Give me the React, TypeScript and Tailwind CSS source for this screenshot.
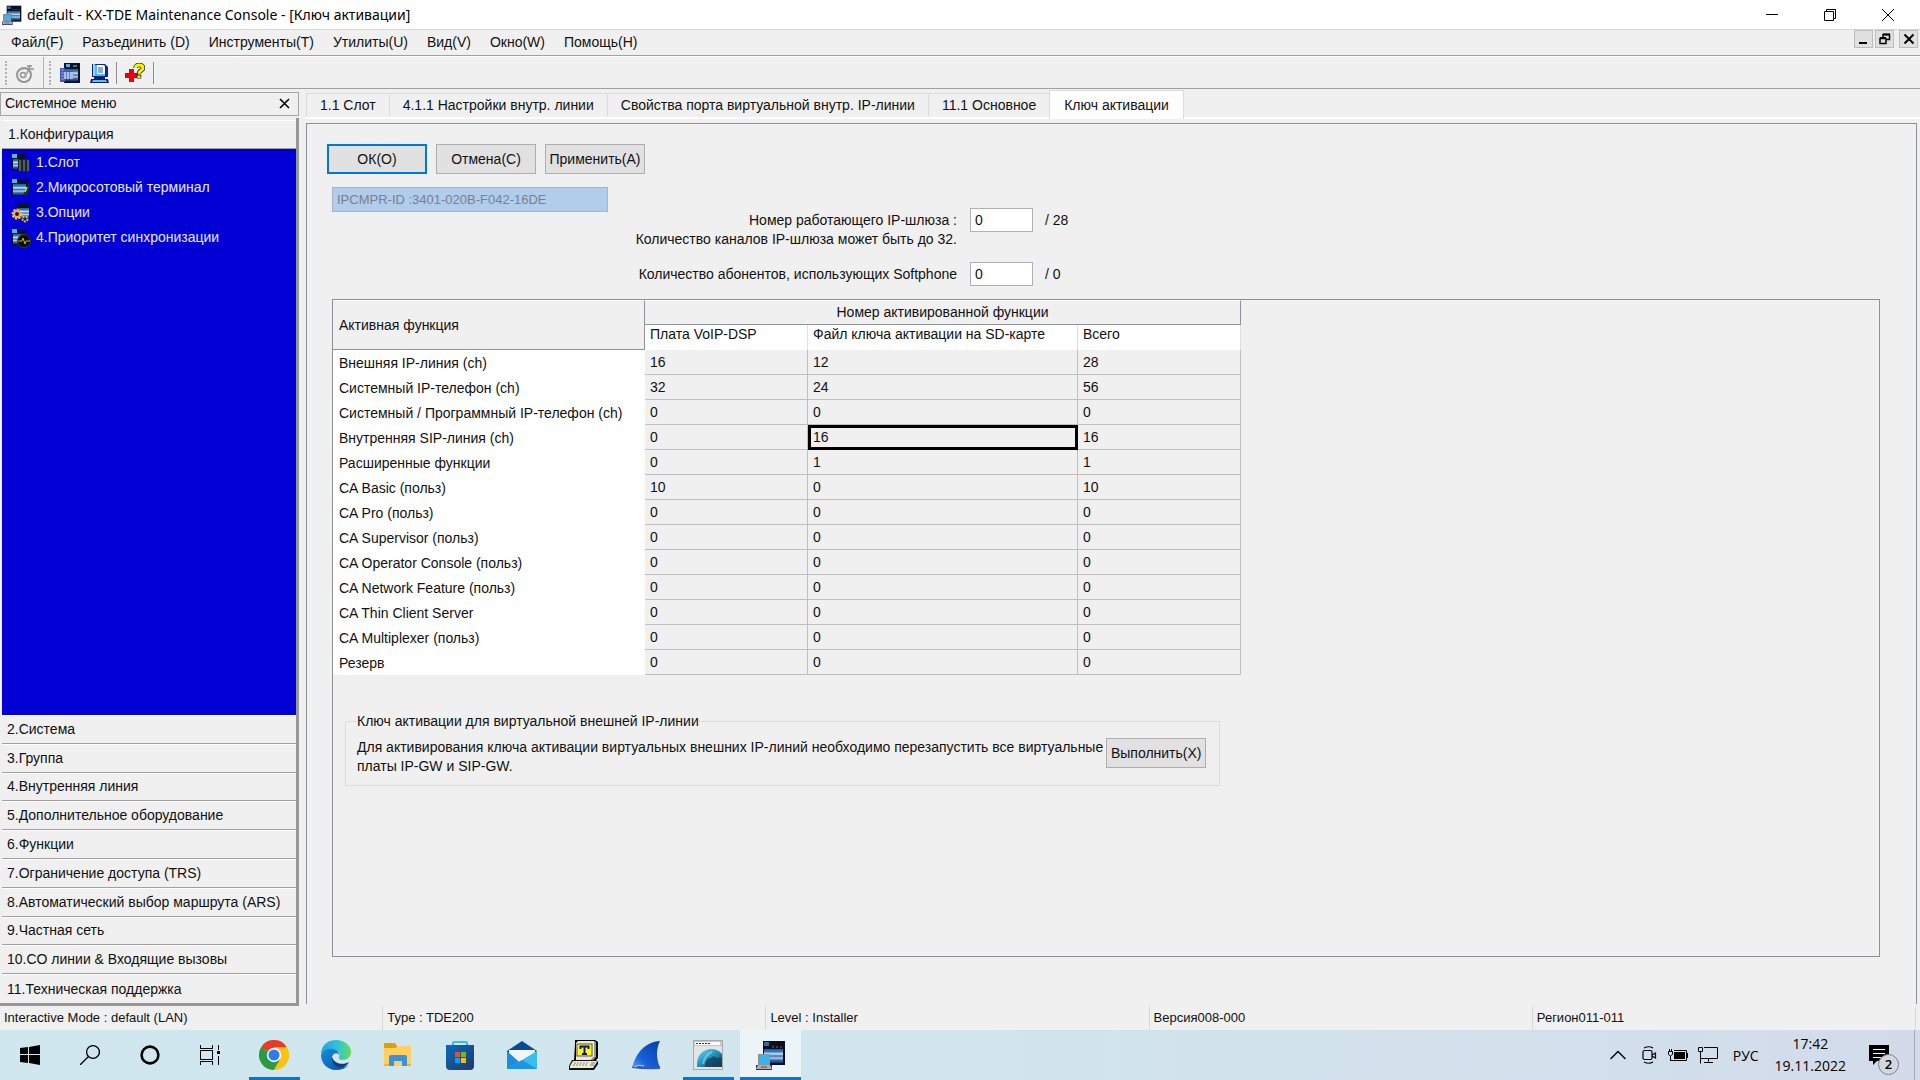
import { useState } from 'react';
import type { ReactNode } from 'react';

const menus = ['Файл(F)', 'Разъединить (D)', 'Инструменты(T)', 'Утилиты(U)', 'Вид(V)', 'Окно(W)', 'Помощь(H)'];

const tabs = [
  '1.1 Слот',
  '4.1.1 Настройки внутр. линии',
  'Свойства порта виртуальной внутр. IP-линии',
  '11.1 Основное',
  'Ключ активации',
];

const sections = [
  '2.Система',
  '3.Группа',
  '4.Внутренняя линия',
  '5.Дополнительное оборудование',
  '6.Функции',
  '7.Ограничение доступа (TRS)',
  '8.Автоматический выбор маршрута (ARS)',
  '9.Частная сеть',
  '10.CO линии & Входящие вызовы',
  '11.Техническая поддержка',
];

const rows: [string, number, number, number][] = [
  ['Внешняя IP-линия (ch)', 16, 12, 28],
  ['Системный IP-телефон (ch)', 32, 24, 56],
  ['Системный / Программный IP-телефон (ch)', 0, 0, 0],
  ['Внутренняя SIP-линия (ch)', 0, 16, 16],
  ['Расширенные функции', 0, 1, 1],
  ['CA Basic (польз)', 10, 0, 10],
  ['CA Pro (польз)', 0, 0, 0],
  ['CA Supervisor (польз)', 0, 0, 0],
  ['CA Operator Console (польз)', 0, 0, 0],
  ['CA Network Feature (польз)', 0, 0, 0],
  ['CA Thin Client Server', 0, 0, 0],
  ['CA Multiplexer (польз)', 0, 0, 0],
  ['Резерв', 0, 0, 0],
];

const status = ['Interactive Mode : default (LAN)', 'Type : TDE200', 'Level : Installer', 'Версия008-000', 'Регион011-011'];

/* ---------- Icons ---------- */

// Gradients shared by all the icons
function IconDefs() {
  return (
    <svg className="absolute h-0 w-0" aria-hidden="true">
      <defs>
        <linearGradient id="pbx" x1="0" y1="0" x2="0" y2="1">
          <stop offset="0" stopColor="#1d5c9c" />
          <stop offset=".2" stopColor="#2f7fc4" />
          <stop offset=".35" stopColor="#d5e2f5" />
          <stop offset=".5" stopColor="#3c70b8" />
          <stop offset=".65" stopColor="#b9cbe8" />
          <stop offset=".8" stopColor="#3a67a8" />
          <stop offset="1" stopColor="#16345f" />
        </linearGradient>
        <linearGradient id="edgeTop" x1="0" y1="0" x2="1" y2="0">
          <stop offset="0" stopColor="#2b9fe0" />
          <stop offset=".55" stopColor="#2fc2df" />
          <stop offset="1" stopColor="#66de50" />
        </linearGradient>
        <linearGradient id="edgeBody" x1="0" y1="0" x2="1" y2="1">
          <stop offset="0" stopColor="#1590dd" />
          <stop offset="1" stopColor="#0b4a9e" />
        </linearGradient>
        <linearGradient id="store" x1="0" y1="0" x2="1" y2="1">
          <stop offset="0" stopColor="#0a6abf" />
          <stop offset="1" stopColor="#223a66" />
        </linearGradient>
        <linearGradient id="fin" x1="0" y1="1" x2="1" y2="0">
          <stop offset="0" stopColor="#5ba2f0" />
          <stop offset=".35" stopColor="#1560d8" />
          <stop offset="1" stopColor="#0a3ea8" />
        </linearGradient>
        <linearGradient id="globe" x1="0" y1="0" x2="1" y2="1">
          <stop offset="0" stopColor="#7fdcf2" />
          <stop offset=".4" stopColor="#2aa0cc" />
          <stop offset="1" stopColor="#0d3a5c" />
        </linearGradient>
      </defs>
    </svg>
  );
}

function ConsoleIcon({ className }: { className: string }) {
  return (
    <svg viewBox="0 0 30 30" className={className}>
      <rect x="7" y="1" width="22" height="24" fill="#0a0f22" />
      <rect x="8" y="2" width="5" height="4" fill="#2d6ca8" />
      <rect x="8" y="9" width="19" height="14" fill="url(#pbx)" />
      <path d="M16 7h2M20 7h2" stroke="#1ea35a" />
      <path d="M24 7h2" stroke="#d22" />
      <path d="M2 14h12v11h2v5H0v-5h2z" fill="#2a2c7a" />
      <rect x="2" y="14" width="12" height="11" fill="#8b949c" />
      <rect x="4" y="15" width="9" height="8" fill="#39b4ee" />
      <path d="M2 25h12l2 4H0z" fill="#a9b0b5" />
      <path d="M5 27h6" stroke="#555" />
    </svg>
  );
}

function DisconnectIcon() {
  return (
    <svg viewBox="0 0 20 22" className="h-[22px] w-5" fill="none" stroke="#949494">
      <circle cx="9" cy="13" r="7" strokeWidth="2" />
      <circle cx="8" cy="13" r="2.5" strokeWidth="1.5" />
      <path d="M10 15l4-8 1-4M12 4h5M13 7h6" strokeWidth="1.5" />
      <path d="M6 8l4-1M11 10v6" stroke="#bdbdbd" />
    </svg>
  );
}

function BatchIcon() {
  return (
    <svg viewBox="0 0 20 20" className="h-5 w-5">
      <rect x="4" y="0" width="16" height="20" fill="#0c1126" />
      <rect x="6" y="1" width="4" height="3" fill="#3fb4e8" />
      <rect x="5" y="6" width="13" height="12" fill="url(#pbx)" />
      <path d="M13 3h4" stroke="#7de" />
      <path d="M0 5h5v3h8v8H5v3H0z" fill="#4a55b0" />
      <path d="M1 7h3M1 10h3M1 13h3M1 16h3" stroke="#9aa4ff" />
      <rect x="4" y="9" width="9" height="7" fill="#a9bce2" />
      <path d="M6.500 9v7M9.500 9v7" stroke="#6c86c0" />
    </svg>
  );
}

function PcIcon() {
  return (
    <svg viewBox="0 0 20 20" className="h-5 w-5">
      <path d="M3 1h13l3 3v10H3z" fill="#10248c" />
      <path d="M4 1h2v12H4z" fill="#7edcff" />
      <rect x="6" y="2" width="10" height="11" fill="#48bdf0" />
      <path d="M8 2h6l2 2v7H8z" fill="#fff" />
      <path d="M9 5h5M9 7h5M9 9h5" stroke="#2b4bb5" />
      <path d="M5 14h11v2h3l1 4H1l1-4h3z" fill="#15205a" />
      <path d="M4 17h13l1 2H3z" fill="#5cc0ea" />
    </svg>
  );
}

function HelpIcon() {
  return (
    <svg viewBox="0 0 20 20" className="h-5 w-5">
      <path d="M4 6h5v4h4v5H9v4H4v-4H0v-5h4z" fill="#e8000b" />
      <g fill="none">
        <path d="M10.500 5c0-4 7.500-4 7.500 0 0 3-4 2-4 5.500" stroke="#222" strokeWidth="4.500" />
        <path d="M14 11.500v4" stroke="#222" strokeWidth="4.500" />
        <path d="M10.500 5c0-4 7.500-4 7.500 0 0 3-4 2-4 5.500" stroke="#ffee00" strokeWidth="3" />
        <path d="M14 12.500v2.500" stroke="#ffee00" strokeWidth="3" />
      </g>
    </svg>
  );
}

// Small cabinet with a different overlay for every configuration item
function CabinetIcon({ children }: { children: ReactNode }) {
  return (
    <svg viewBox="0 0 20 20" className="h-5 w-5">
      <rect x="1" y="1" width="13" height="16" fill="#0a1226" />
      <rect x="1" y="1" width="5" height="4" fill="#57b5e6" />
      <rect x="2" y="6" width="11" height="10" fill="url(#pbx)" />
      {children}
    </svg>
  );
}

const configItems = [
  {
    name: '1.Слот',
    overlay: (
      <>
        <rect x="7" y="6" width="12" height="13" fill="#1d2024" />
        <path d="M9 7v11M13 7v11M17 7v11" stroke="#7fa0b0" />
      </>
    ),
  },
  {
    name: '2.Микросотовый терминал',
    overlay: (
      <>
        <rect x="1" y="1" width="16" height="17" fill="#0a1226" />
        <rect x="1" y="1" width="5" height="4" fill="#57b5e6" />
        <rect x="2" y="6" width="13" height="11" fill="url(#pbx)" />
        <path d="M18 4l-6 13 4 1 3-7z" fill="#1f2a24" />
        <path d="M16 9l-2 5" stroke="#9fd8b8" strokeWidth="1.500" />
      </>
    ),
  },
  {
    name: '3.Опции',
    overlay: (
      <>
        <rect x="1" y="1" width="6" height="16" fill="#0000d4" />
        <rect x="7" y="1" width="12" height="15" fill="#0a1226" />
        <rect x="8" y="5" width="10" height="10" fill="url(#pbx)" />
        <circle cx="6" cy="11" r="4" fill="#2b1d05" stroke="#f5c77e" strokeWidth="3" strokeDasharray="2 1" />
        <circle cx="6" cy="11" r="3" fill="none" stroke="#e8b060" strokeWidth="2" />
        <circle cx="14" cy="16" r="2.500" fill="#222" stroke="#d9b98a" strokeWidth="2" strokeDasharray="2 1" />
      </>
    ),
  },
  {
    name: '4.Приоритет синхронизации',
    overlay: (
      <>
        <circle cx="13" cy="13" r="6.500" fill="#0d0f08" stroke="#3a3a24" />
        <path d="M7 13h4l1-3 2 6 1-3h4" fill="none" stroke="#b5ad22" />
      </>
    ),
  },
];

function StartIcon() {
  return (
    <svg viewBox="0 0 20 20" className="h-5 w-5">
      <path d="M0 3l8-1v7H0zM9 2l11-2v9H9zM0 10h8v8l-8-1zM9 10h11v10L9 18z" fill="#000" />
    </svg>
  );
}

function SearchIcon() {
  return (
    <svg viewBox="0 0 20 20" className="h-5 w-5" fill="none" stroke="#000" strokeWidth="1.300">
      <circle cx="13" cy="7" r="6.400" />
      <path d="M8.500 11.500L0 20" />
    </svg>
  );
}

function CortanaIcon() {
  return (
    <svg viewBox="0 0 20 20" className="h-5 w-5" fill="none" stroke="#000" strokeWidth="2.600">
      <circle cx="10" cy="10" r="8.400" />
    </svg>
  );
}

function TaskViewIcon() {
  return (
    <svg viewBox="0 0 20 20" className="h-5 w-5" fill="none" stroke="#000" shapeRendering="crispEdges">
      <path d="M.5 0v3.500h12V0M.5 20v-3.500h12V20" />
      <rect x=".5" y="5.500" width="12" height="9" />
      <path d="M18.500 0v5M18.500 11v9" />
      <path d="M17 7.500h3" strokeWidth="3" />
    </svg>
  );
}

function ChromeIcon() {
  return (
    <svg viewBox="0 0 30 30" className="h-[30px] w-[30px]">
      <circle cx="15" cy="15" r="15" fill="#fbc116" />
      <path d="M15 15L2 7.500A15 15 0 0 1 28 7.500H15z" fill="#e33b2e" />
      <path d="M2 7.500A15 15 0 0 0 15 30l6.500-11.200L15 15z" fill="#2a9a47" />
      <path d="M15 30A15 15 0 0 0 28 7.500H15l6.500 11.300z" fill="#fbc116" />
      <circle cx="15" cy="15" r="7.200" fill="#fff" />
      <circle cx="15" cy="15" r="5.600" fill="#2f7bea" />
    </svg>
  );
}

function EdgeIcon() {
  return (
    <svg viewBox="0 0 30 30" className="h-[30px] w-[30px]">
      <path d="M0 15C0 5 7 0 15 0c9 0 15 6 15 12 0 5-4 8-8 8-3 0-5-1-4-3 2-5-2-8-7-8C6 9 2 11 0 15z" fill="url(#edgeTop)" />
      <path d="M0 15c2-5 6-7 11-6 4 0 7 2 7 6-2-3-6-2-7 2-1 6 5 10 11 10 2 0 4-1 6-2-3 3-8 5-13 5C6 30 0 23 0 15z" fill="url(#edgeBody)" />
      <path d="M11 17c-1 6 4 12 12 10 2-1 4-3 5-5-5 3-14 3-17-5z" fill="#0d3f7c" />
    </svg>
  );
}

function ExplorerIcon() {
  return (
    <svg viewBox="0 0 28 24" className="h-6 w-7">
      <path d="M0 1q0-1 1-1h10l2 3v4H0z" fill="#e0a100" />
      <path d="M0 5h12l2-2h13v20H0z" fill="#fdd063" />
      <path d="M5 23v-9q0-2 2-2h14q2 0 2 2v9h-5v-5h-8v5z" fill="#3c92d8" />
      <path d="M0 21h5v2H0zM23 21h4v2h-4z" fill="#f4b72b" />
    </svg>
  );
}

function StoreIcon() {
  return (
    <svg viewBox="0 0 30 30" className="h-[30px] w-[30px]">
      <path d="M8 6V3q0-1 1-1h12q1 0 1 1v3" fill="none" stroke="#38bdf2" strokeWidth="2" />
      <path d="M1 5h28v21q0 4-4 4H5q-4 0-4-4z" fill="url(#store)" />
      <rect x="10" y="12" width="5" height="5" fill="#f25022" />
      <rect x="16" y="12" width="5" height="5" fill="#7fba00" />
      <rect x="10" y="18" width="5" height="5" fill="#00a4ef" />
      <rect x="16" y="18" width="5" height="5" fill="#ffb900" />
    </svg>
  );
}

function MailIcon() {
  return (
    <svg viewBox="0 0 30 28" className="h-7 w-[30px]">
      <path d="M0 10L15 0l15 10v3H0z" fill="#0a4c94" />
      <path d="M2 9h26v6L15 22 2 15z" fill="#f3f4f6" />
      <path d="M0 10l20 18H0z" fill="#1a8fdd" />
      <path d="M30 10v18H0z" fill="#37bdf0" />
      <path d="M15 19l15 9H0z" fill="#1e96e2" />
    </svg>
  );
}

function TerminalIcon() {
  return (
    <svg viewBox="0 0 30 30" className="h-[30px] w-[30px]">
      <path d="M6 0h20l3 2v16l-3 3H5l1-17z" fill="#000" />
      <path d="M7 3l2-2h16v16l-3 3H7z" fill="#ece9d8" />
      <path d="M25 1l2 1v15l-3 3h-2l3-3z" fill="#9b988a" />
      <rect x="8" y="4" width="15" height="12" fill="#ff0" stroke="#555" />
      <path d="M11.500 9V6.500h8V9M15.500 6.500V14M13 14h5" fill="none" stroke="#11118a" strokeWidth="2" />
      <path d="M3 20h24l2 2v2l-4 6H0v-4z" fill="#111" />
      <path d="M4 21h23l1 1-4 6H1v-2z" fill="#ece9d8" />
      <path d="M5 23h14M4 25h14" stroke="#888" strokeDasharray="2 1" />
      <path d="M22 23h4M21 25h4" stroke="#777" />
    </svg>
  );
}

function SharkIcon() {
  return (
    <svg viewBox="0 0 30 30" className="h-[30px] w-[30px]">
      <path d="M1 28C5 13 14 2 29 1c-4 8-4 17 0 27z" fill="url(#fin)" />
      <path d="M1 27c7-3 14 2 28-1v3q-14 1-28-1z" fill="#3a56a8" />
      <path d="M3 27q5-3 10-1" fill="none" stroke="#a9cdf8" />
    </svg>
  );
}

function BrowserIcon() {
  return (
    <svg viewBox="0 0 30 30" className="h-[30px] w-[30px]">
      <rect x=".5" y=".5" width="29" height="29" fill="#e4e4e6" stroke="#a9a9ab" />
      <rect x="1" y="1" width="28" height="5" fill="#c9c5c2" />
      <rect x="2" y="2" width="25" height="3" fill="#fff" />
      <path d="M3 3.500h14" stroke="#333" strokeDasharray="2 1" />
      <path d="M4 27C3 15 10 9 18 9q7 0 11 5v13z" fill="url(#globe)" />
      <path d="M12 27c0-5 2-9 6-9l3-2 2 2 6-1v10z" fill="#173f58" opacity=".75" />
      <path d="M10 24c1-6 4-10 9-12" fill="none" stroke="#d4f5ff" strokeWidth="2" opacity=".4" />
    </svg>
  );
}

function ChevronIcon() {
  return (
    <svg viewBox="0 0 16 10" className="h-2.5 w-4" fill="none" stroke="#000" strokeWidth="1.400">
      <path d="M.5 9L8 1.500 15.500 9" />
    </svg>
  );
}

function MeetIcon() {
  return (
    <svg viewBox="0 0 15 18" className="h-[18px] w-[15px]" fill="none" stroke="#000" strokeWidth="1.200">
      <rect x="1" y="4.500" width="9" height="9" rx="1.500" />
      <path d="M10 9l3.500-2v5L10 10M2 2q5-2.500 9 0M2 16q5 2.500 9 0" />
    </svg>
  );
}

function BatteryIcon() {
  return (
    <svg viewBox="0 0 20 14" className="h-3.5 w-5" fill="none" stroke="#000">
      <path d="M6 2.500h12.500v10H3" />
      <rect x="6" y="4" width="11" height="7" fill="#000" stroke="none" />
      <rect x="18" y="5" width="2" height="5" fill="#000" stroke="none" />
      <path d="M.5 3.500h4v3l-2 1.500-2-1.500zM1.500 1v2M3.500 1v2M2.500 8v5" />
    </svg>
  );
}

function NetworkIcon() {
  return (
    <svg viewBox="0 0 20 18" className="h-[18px] w-5" fill="none" stroke="#000">
      <path d="M6 1.500h13.500v11H3M10.500 12.500v3M6 16.500h9" />
      <path d="M.5 1.500h4v4h-4zM2.500 5.500v12" />
    </svg>
  );
}

/* ---------- Window ---------- */

function TitleBar() {
  const box = 'flex h-[29px] w-[58px] items-center justify-center';
  return (
    <header className="flex h-[29px] shrink-0 items-center bg-white pr-[3px]">
      <ConsoleIcon className="ml-0.5 h-5 w-5" />
      <h1 className="ml-[5px] flex-1 font-['Noto_Sans',sans-serif] text-[14px] text-black">
        default - KX-TDE Maintenance Console - [Ключ активации]
      </h1>
      <button aria-label="Свернуть" className={box}>
        <svg viewBox="0 0 12 12" className="h-3 w-3" stroke="#000">
          <path d="M0 5.500h12" />
        </svg>
      </button>
      <button aria-label="Восстановить" className={box}>
        <svg viewBox="0 0 12 12" className="h-3 w-3" fill="none" stroke="#000">
          <path d="M.5 2.500h9v9h-9zM2.500 2.500v-2h9v9h-2" />
        </svg>
      </button>
      <button aria-label="Закрыть" className={box}>
        <svg viewBox="0 0 12 12" className="h-3 w-3" stroke="#000">
          <path d="M0 0l12 12M12 0L0 12" />
        </svg>
      </button>
    </header>
  );
}

function MenuBar() {
  const box = 'flex h-[18px] w-[19px] items-center justify-center border border-[#bdbdbd] bg-[#e1e1e1]';
  return (
    <nav className="flex h-[27px] shrink-0 items-start border-t border-b border-t-[#d5d8d8] border-b-[#a0a0a0]">
      <ul className="flex flex-1 gap-[19px] pl-[11px] leading-[24px]">
        {menus.map((m) => (
          <li key={m}>
            <button>{m}</button>
          </li>
        ))}
      </ul>
      <div className="flex gap-0.5 pr-0.5">
        <button aria-label="Свернуть окно" className={box}>
          <svg viewBox="0 0 12 12" className="h-3 w-3">
            <rect x="1" y="9" width="8" height="2" fill="#000" />
          </svg>
        </button>
        <button aria-label="Восстановить окно" className={box}>
          <svg viewBox="0 0 12 12" className="h-3 w-3" fill="none" stroke="#000" strokeWidth="1.500">
            <path d="M1 5.500h6v5H1zM4 5V1.500h6.500v5H7.500" />
            <path d="M1 5h6M4 1.500h7" strokeWidth="2" />
          </svg>
        </button>
        <button aria-label="Закрыть окно" className={`${box} ml-[3px]`}>
          <svg viewBox="0 0 12 12" className="h-3 w-3" stroke="#000" strokeWidth="2">
            <path d="M1.500 1.500l9 9M10.500 1.500l-9 9" />
          </svg>
        </button>
      </div>
    </nav>
  );
}

function Toolbar() {
  return (
    <div className="flex h-[33px] shrink-0 items-center border-t border-b border-t-white border-b-[#a0a0a0]">
      <span className="ml-[5px] h-6 border-l-2 border-dotted border-[#b0b0b0]" />
      <button aria-label="Разъединить" className="ml-2">
        <DisconnectIcon />
      </button>
      <span className="ml-2 h-full border-l border-[#b4b4b4]" />
      <span className="ml-[5px] h-6 border-l-2 border-dotted border-[#b0b0b0]" />
      <button aria-label="Пакетный режим" className="ml-[9px]">
        <BatchIcon />
      </button>
      <button aria-label="Интерактивный режим" className="ml-[9px]">
        <PcIcon />
      </button>
      <span className="ml-[7px] h-[22px] border-l border-[#8f8f8f]" />
      <button aria-label="Справка" className="ml-2">
        <HelpIcon />
      </button>
      <span className="ml-2 h-[22px] border-l border-[#8f8f8f]" />
    </div>
  );
}

function Sidebar() {
  return (
    <aside className="flex w-[299px] shrink-0 flex-col pt-[3px]">
      <div className="flex h-6 shrink-0 items-center justify-between border border-[#a5a5a5] pr-2 pb-px pl-1">
        <h2>Системное меню</h2>
        <button aria-label="Закрыть меню">
          <svg viewBox="0 0 11 11" className="h-[11px] w-[11px]" stroke="#000" strokeWidth="1.600">
            <path d="M1 1l9 9M10 1l-9 9" />
          </svg>
        </button>
      </div>
      <div className="mt-0.5 flex flex-1 flex-col border-r-3 border-b-3 border-[#979797] pl-0.5">
        <button className="mt-0.5 h-[29px] shrink-0 border-t border-b border-t-white border-b-[#a0a0a0] pl-1.5 text-left">
          1.Конфигурация
        </button>
        <ul className="flex-1 bg-[#0000d4] py-px">
          {configItems.map((item) => (
            <li key={item.name}>
              <a href="#" className="flex h-[25px] items-center gap-[5px] pl-[9px] text-[#e8e8ff]">
                <CabinetIcon>{item.overlay}</CabinetIcon>
                {item.name}
              </a>
            </li>
          ))}
        </ul>
        <div className="grid h-72 shrink-0 grid-rows-10">
          {sections.map((s) => (
            <button
              key={s}
              className="border-t border-b border-t-white border-b-[#a0a0a0] pl-[5px] text-left last:border-b-0"
            >
              {s}
            </button>
          ))}
        </div>
      </div>
    </aside>
  );
}

function TabStrip() {
  return (
    <div role="tablist" className="flex h-[30px] shrink-0 items-end border-b-2 border-white pl-px">
      {tabs.map((t, i) =>
        i === tabs.length - 1 ? (
          <button
            key={t}
            role="tab"
            aria-selected="true"
            className="-mb-0.5 h-[29px] border border-b-0 border-[#dcdcdc] bg-white px-3.5"
          >
            {t}
          </button>
        ) : (
          <button key={t} role="tab" aria-selected="false" className="h-6 border-t border-l border-[#dcdcdc] px-[13px]">
            {t}
          </button>
        ),
      )}
    </div>
  );
}

function LicenseTable() {
  const head = 'border-t border-t-white border-r border-b border-r-[#8f9399] border-b-[#8f9399] font-normal';
  return (
    <table className="w-[908px] table-fixed border-separate border-spacing-0 text-left leading-[19px]">
      <colgroup>
        <col className="w-[312px]" />
        <col className="w-[163px]" />
        <col className="w-[270px]" />
        <col className="w-[163px]" />
      </colgroup>
      <thead>
        <tr className="h-[25px]">
          <th rowSpan={2} className={`${head} pl-1.5`}>
            Активная функция
          </th>
          <th colSpan={3} className={`${head} text-center`}>
            Номер активированной функции
          </th>
        </tr>
        <tr className="h-[25px] bg-white">
          {['Плата VoIP-DSP', 'Файл ключа активации на SD-карте', 'Всего'].map((h) => (
            <th key={h} className="border-r border-[#e0e0e0] pb-1.5 pl-[5px] font-normal">
              {h}
            </th>
          ))}
        </tr>
      </thead>
      <tbody>
        {rows.map(([name, ...values]) => (
          <tr key={name} className="h-[25px]">
            <th className="bg-white pt-0.5 pl-1.5 font-normal">{name}</th>
            {values.map((v, col) =>
              name === 'Внутренняя SIP-линия (ch)' && col === 1 ? (
                <td key={col} className="border-3 border-black pl-0.5">
                  {v}
                </td>
              ) : (
                <td key={col} className="border-r border-b border-[#bfbfbf] pl-[5px]">
                  {v}
                </td>
              ),
            )}
          </tr>
        ))}
      </tbody>
    </table>
  );
}

function ActivationPage() {
  const [gateways, setGateways] = useState('0');
  const [softphones, setSoftphones] = useState('0');
  const button = 'h-[30px] w-[100px] border border-[#adadad] bg-[#e1e1e1] whitespace-nowrap';
  const field = 'h-6 w-[63px] border border-[#b0b0b8] bg-white px-1';

  return (
    <main className="mt-1 mr-[3px] mb-0.5 ml-px flex flex-1 flex-col border-t border-r border-l border-[#8b929a] pt-5 pr-9 pb-[47px]">
      <div className="flex gap-[9px] pl-5">
        <button className="h-[30px] w-[100px] border-2 border-[#0078d7] bg-[#e1e1e1]">ОК(O)</button>
        <button className={button}>Отмена(C)</button>
        <button className={button}>Применить(A)</button>
      </div>

      <div className="mt-[13px] flex items-start pl-[25px]">
        <input
          aria-label="IPCMPR-ID"
          disabled
          value="IPCMPR-ID :3401-020B-F042-16DE"
          className="h-[25px] w-[276px] border border-[#a9b4c0] bg-[#b0cdec] px-1 text-[13px] text-[#7c8088]"
        />
        <div className="w-[349px] pt-[21px] text-right">
          <label htmlFor="gateways" className="block leading-[24px]">
            Номер работающего IP-шлюза :
          </label>
          <p className="leading-[15px]">Количество каналов IP-шлюза может быть до 32.</p>
          <label htmlFor="softphones" className="mt-[15px] block leading-[24px]">
            Количество абонентов, использующих Softphone
          </label>
        </div>
        <div className="flex flex-col gap-[30px] pt-[21px] pl-[13px]">
          <div className="flex items-center gap-3">
            <input id="gateways" value={gateways} onChange={(e) => setGateways(e.target.value)} className={field} />
            <span>/ 28</span>
          </div>
          <div className="flex items-center gap-3">
            <input id="softphones" value={softphones} onChange={(e) => setSoftphones(e.target.value)} className={field} />
            <span>/ 0</span>
          </div>
        </div>
      </div>

      <section className="mt-[13px] ml-[25px] flex-1 border border-[#8b8f9a]">
        <LicenseTable />
        <fieldset className="mt-9 ml-3 h-[75px] w-[875px] border border-[#dcdcdc] px-[11px]">
          <legend className="leading-[20px]">Ключ активации для виртуальной внешней IP-линии</legend>
          <div className="flex items-start gap-[3px] pt-[7px]">
            <p className="leading-[19px] whitespace-nowrap">
              Для активирования ключа активации виртуальных внешних IP-линий необходимо перезапустить все виртуальные
              <br />
              платы IP-GW и SIP-GW.
            </p>
            <button className={button}>Выполнить(X)</button>
          </div>
        </fieldset>
      </section>
    </main>
  );
}

function StatusBar() {
  return (
    <footer className="grid h-6 shrink-0 grid-cols-5 pr-1 pb-0.5 text-[13px] leading-[24px]">
      {status.map((s) => (
        <span key={s} className="border-r border-[#d9d9d9] pl-1">
          {s}
        </span>
      ))}
    </footer>
  );
}

const apps = [
  { name: 'Chrome', icon: <ChromeIcon />, running: true },
  { name: 'Edge', icon: <EdgeIcon /> },
  { name: 'Проводник', icon: <ExplorerIcon /> },
  { name: 'Store', icon: <StoreIcon /> },
  { name: 'Почта', icon: <MailIcon /> },
  { name: 'Терминал', icon: <TerminalIcon /> },
  { name: 'Wireshark', icon: <SharkIcon /> },
  { name: 'Браузер', icon: <BrowserIcon />, running: true },
];

function Taskbar() {
  return (
    <div className="flex h-[50px] shrink-0 bg-linear-to-r from-[#d0e7ee] via-[#d1e5ee] to-[#d3dbea] font-['Open_Sans',sans-serif] text-black">
      {[
        { name: 'Пуск', icon: <StartIcon /> },
        { name: 'Поиск', icon: <SearchIcon /> },
        { name: 'Кортана', icon: <CortanaIcon /> },
        { name: 'Представление задач', icon: <TaskViewIcon /> },
      ].map((b) => (
        <button key={b.name} aria-label={b.name} className="flex w-15 items-center justify-center">
          {b.icon}
        </button>
      ))}
      <div className="ml-[3px] flex">
        {apps.map((a) => (
          <button key={a.name} aria-label={a.name} className="flex w-[62px] flex-col items-center">
            <span className="flex flex-1 items-center pt-[3px]">{a.icon}</span>
            <span className={a.running ? 'h-[3px] w-[51px] bg-[#0078d7]' : 'h-[3px]'} />
          </button>
        ))}
        <button aria-label="KX-TDE Maintenance Console" className="ml-px flex w-[61px] flex-col items-center bg-[#ecf4f8]">
          <span className="flex flex-1 items-center pt-[3px]">
            <ConsoleIcon className="h-[30px] w-[30px]" />
          </span>
          <span className="h-[3px] w-full bg-[#0078d7]" />
        </button>
      </div>
      <div className="ml-auto flex items-center">
        <button aria-label="Скрытые значки">
          <ChevronIcon />
        </button>
        <span className="ml-4">
          <MeetIcon />
        </span>
        <span className="ml-[11px]">
          <BatteryIcon />
        </span>
        <span className="ml-2.5">
          <NetworkIcon />
        </span>
        <span className="ml-[15px] text-[14px]">РУС</span>
        <time className="ml-4 text-center text-[14px] leading-[22px]">
          17:42
          <br />
          19.11.2022
        </time>
        <button aria-label="Уведомления" className="relative ml-[23px] h-5 w-5">
          <svg viewBox="0 0 20 20" className="h-5 w-5">
            <path d="M0 0h20v16H8l-4 4v-4H0z" fill="#000" />
            <path d="M4 4.500h12M4 8.500h12M4 12.500h8" stroke="#fff" />
          </svg>
          <span className="absolute top-[9px] left-[9px] flex h-[21px] w-[21px] items-center justify-center rounded-full border border-[#7d8288] bg-[#d3d8df] text-[13px] font-semibold">
            2
          </span>
        </button>
        <span className="ml-[25px] h-[50px] w-1.5 border-l border-[#a5abb8]" />
      </div>
    </div>
  );
}

export default function App() {
  return (
    <div className="flex h-screen min-h-[900px] flex-col bg-[#f0f0f0] font-['Liberation_Sans',Arial,sans-serif] text-[14px] text-[#111]">
      <IconDefs />
      <TitleBar />
      <MenuBar />
      <Toolbar />
      <div className="flex min-h-0 flex-1">
        <Sidebar />
        <div className="ml-1.5 flex min-w-0 flex-1 flex-col">
          <TabStrip />
          <ActivationPage />
        </div>
      </div>
      <StatusBar />
      <Taskbar />
    </div>
  );
}
